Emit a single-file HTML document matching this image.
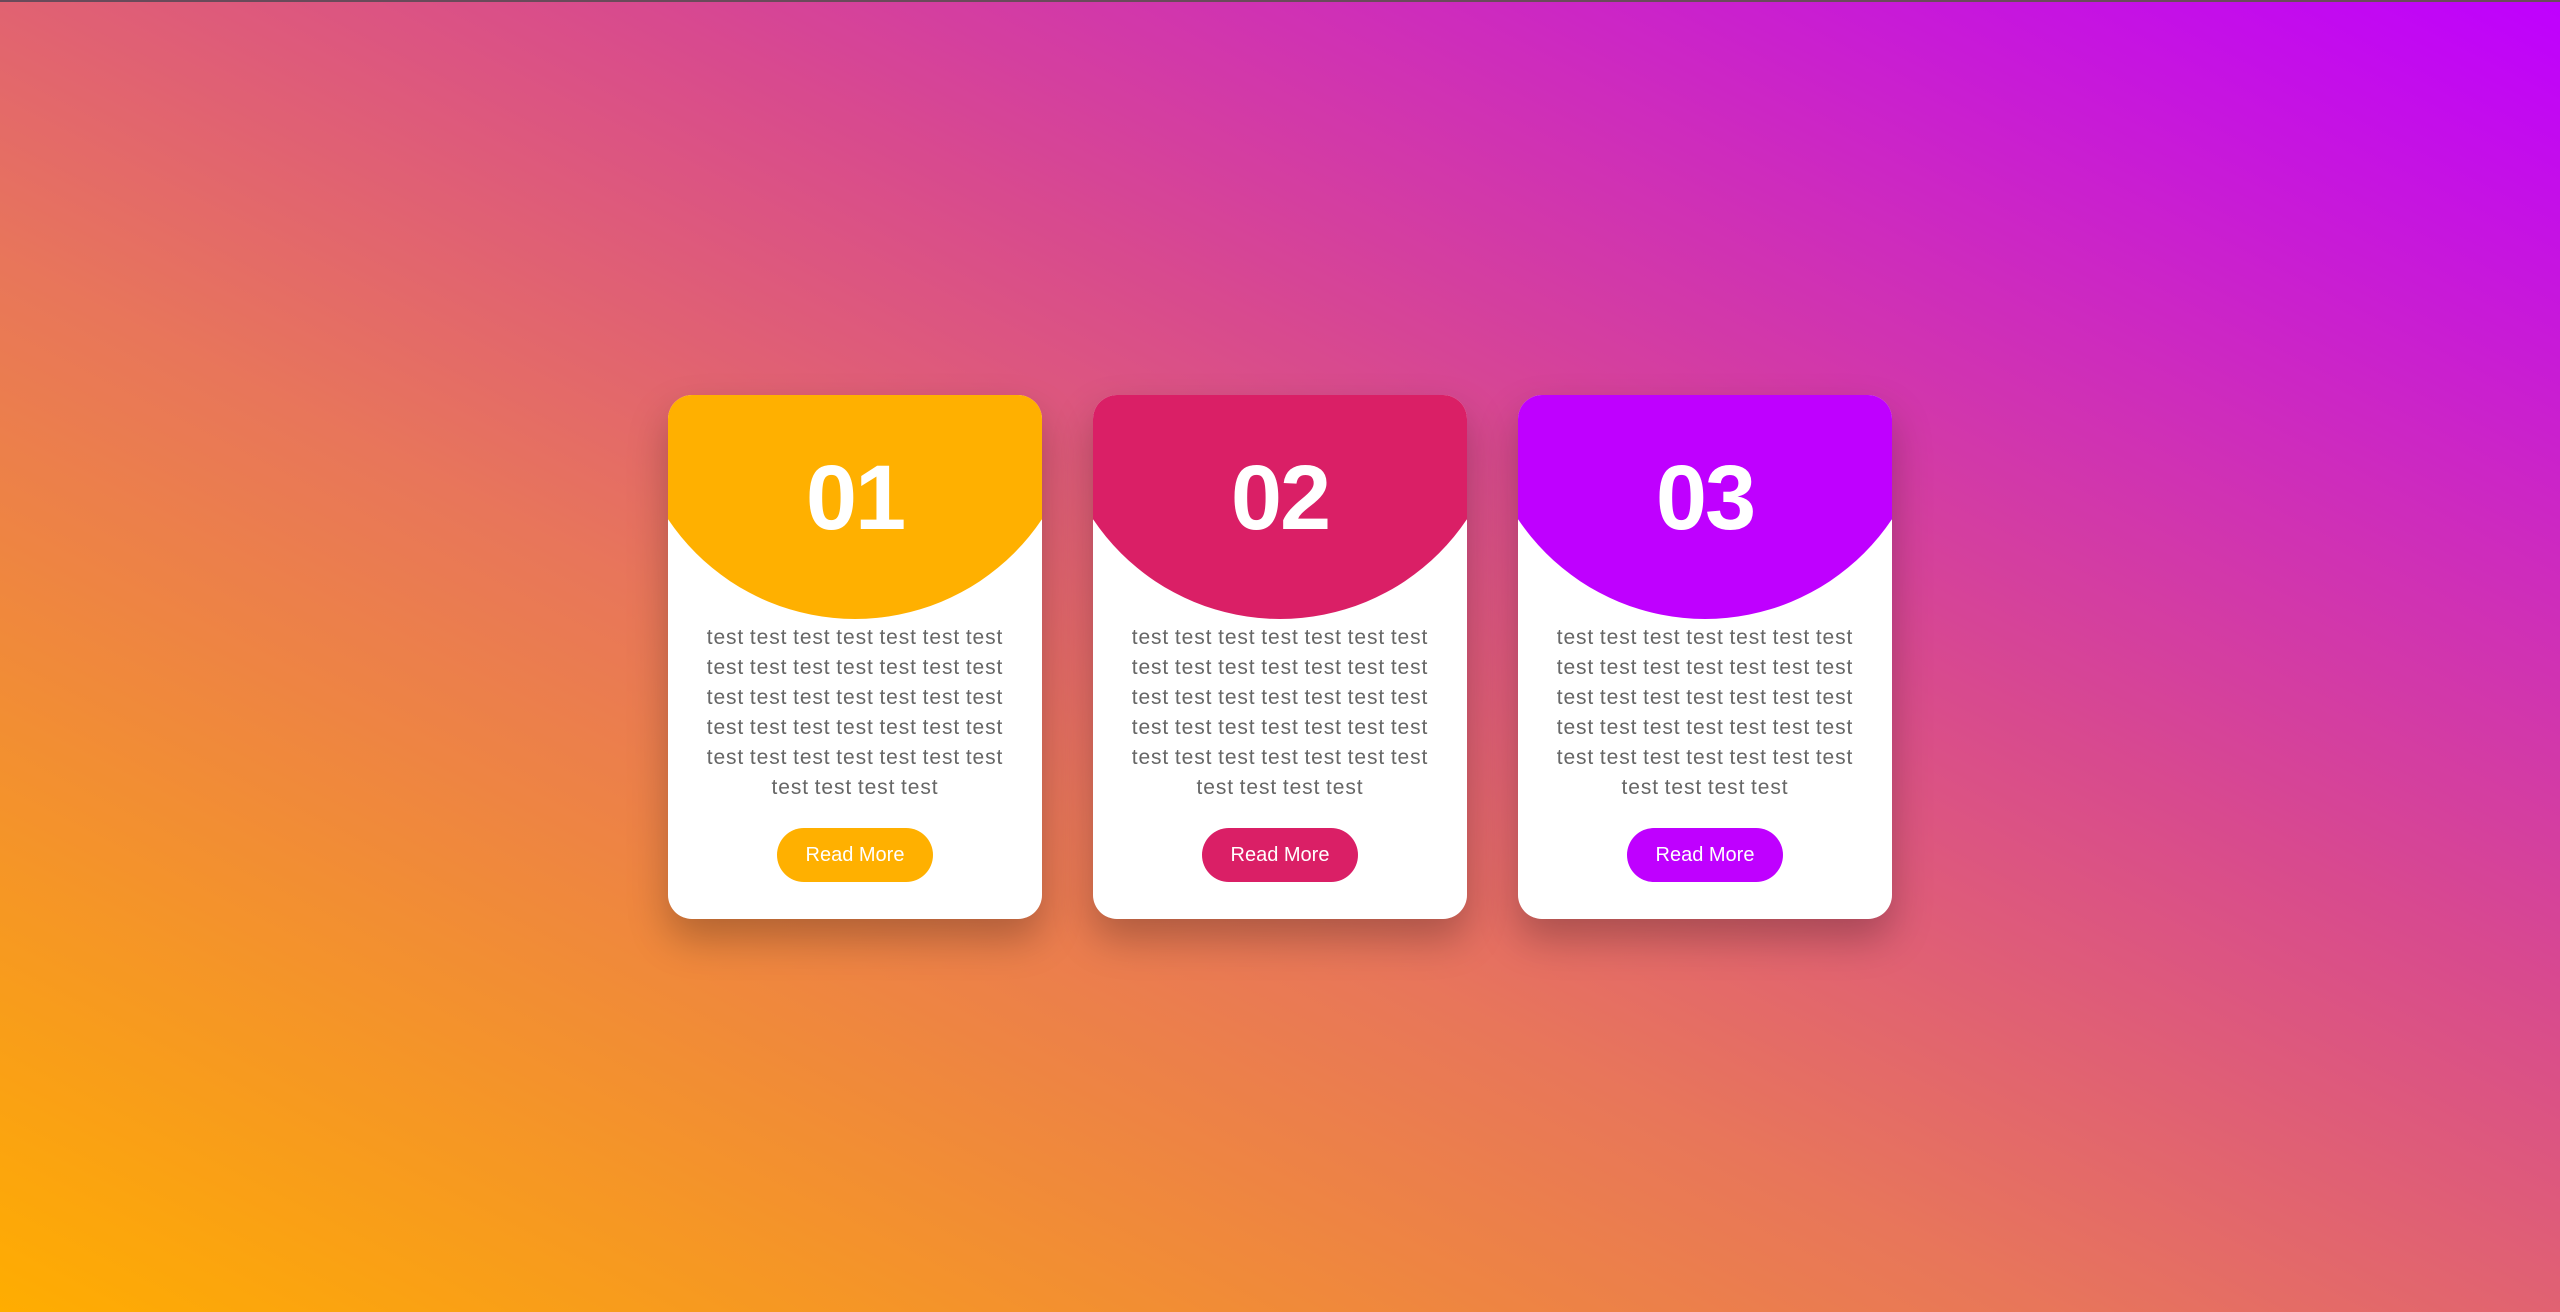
<!DOCTYPE html>
<html><head><style>
html,body{margin:0;padding:0;width:2560px;height:1312px;overflow:hidden}
body{background:linear-gradient(to top right,#ffad00 0%,#e8765a 40%,#d84a8e 62%,#bf00ff 100%);font-family:"Liberation Sans",sans-serif;position:relative}
.topline{position:absolute;left:0;top:0;width:2560px;height:2px;background:#6a4a5a}
.card{position:absolute;top:395px;width:374px;height:524px;background:#fff;border-radius:24px;overflow:hidden;box-shadow:0 20px 40px rgba(0,0,0,0.25)}
.circ{position:absolute;left:-38px;top:-226px;width:450px;height:450px;border-radius:50%}
.num{position:absolute;left:0;right:0;top:48px;text-align:center;color:#fff;font-weight:bold;font-size:92px;line-height:110px;letter-spacing:-2px}
.txt{position:absolute;top:228px;left:32px;right:32px;text-align:center;color:#666;font-size:21px;letter-spacing:0.9px;word-spacing:-1px;line-height:30px}
.btn{position:absolute;left:109px;top:433px;width:156px;height:54px;border-radius:27px;color:#fff;font-size:20px;line-height:54px;text-align:center}
</style></head><body>
<div class="topline"></div>
<div class="card" style="left:668px"><div class="circ" style="background:#ffb000"></div><div class="num">01</div><div class="txt">test test test test test test test test test test test test test test test test test test test test test test test test test test test test test test test test test test test test test test test</div><div class="btn" style="background:#ffb000">Read More</div></div>
<div class="card" style="left:1093px"><div class="circ" style="background:#da1f66"></div><div class="num">02</div><div class="txt">test test test test test test test test test test test test test test test test test test test test test test test test test test test test test test test test test test test test test test test</div><div class="btn" style="background:#da1f66">Read More</div></div>
<div class="card" style="left:1518px"><div class="circ" style="background:#bf00ff"></div><div class="num">03</div><div class="txt">test test test test test test test test test test test test test test test test test test test test test test test test test test test test test test test test test test test test test test test</div><div class="btn" style="background:#bf00ff">Read More</div></div>
</body></html>
